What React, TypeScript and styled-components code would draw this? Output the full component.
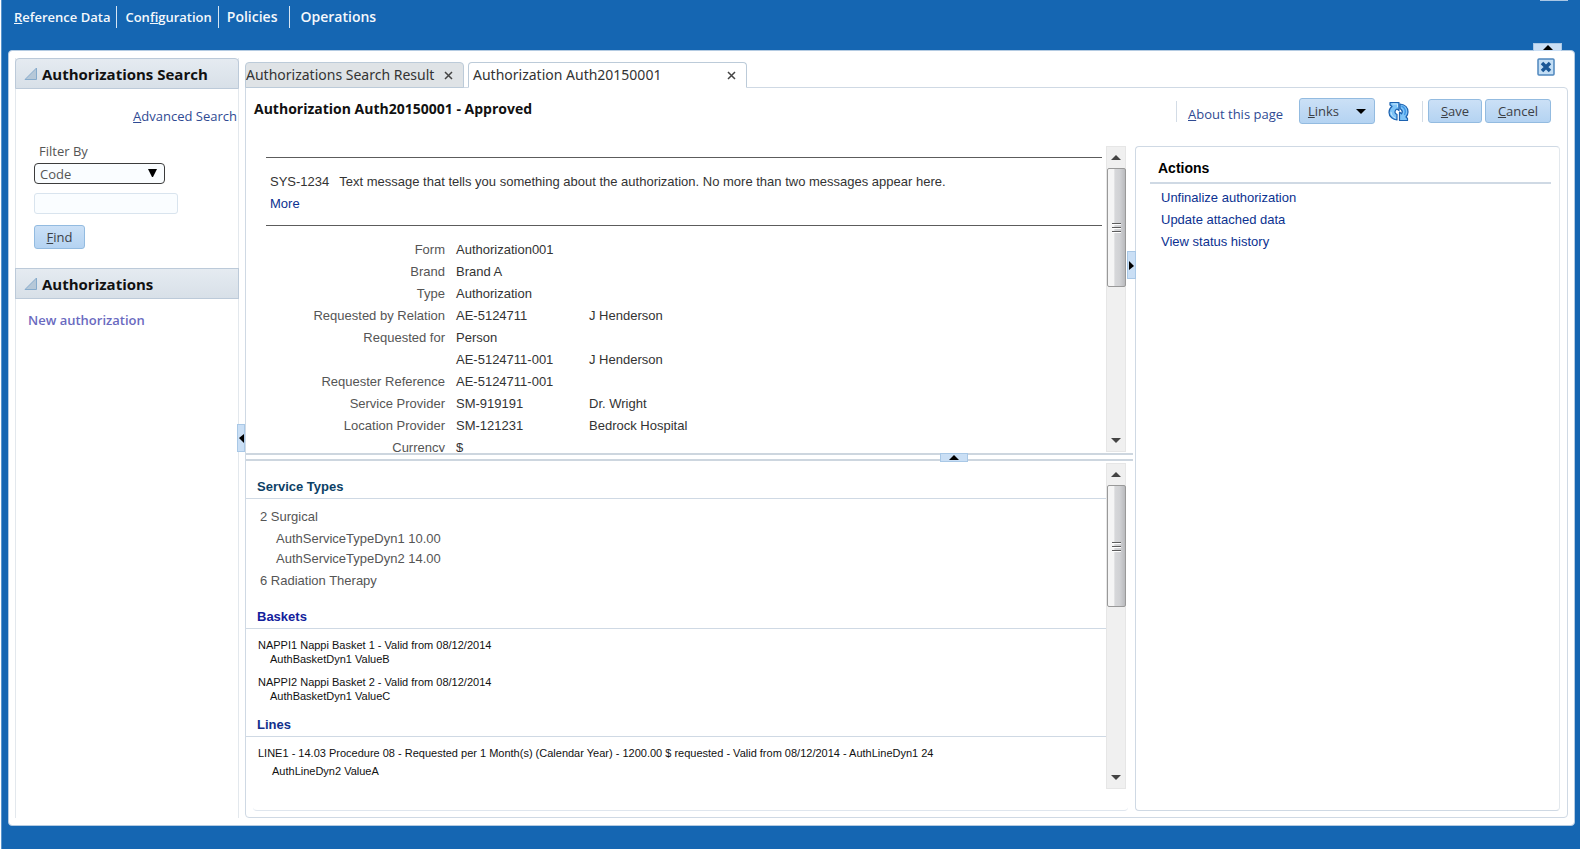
import React from 'react';
import styled, { createGlobalStyle } from 'styled-components';

const humanist = `'Noto Sans', 'Open Sans', sans-serif`;
const calibriLike = `'Open Sans', 'Noto Sans', sans-serif`;
const arial = `'Liberation Sans', Arial, sans-serif`;
const line = '#cfd9e4';
const softLine = '#e3e8ed';
const brand = '#1566b2';
const linkBlue = '#0b3190';

const GlobalStyle = createGlobalStyle`
  *, *::before, *::after { box-sizing: border-box; }
  body { margin: 0; background: #fff; font-family: ${arial}; font-size: 13px; color: #333; }
  a { text-decoration: none; color: inherit; }
  button, input, select { font: inherit; color: inherit; margin: 0; }
  h1, h2, h3, p, ul { margin: 0; padding: 0; font-weight: inherit; }
`;

const Shell = styled.div`
  min-height: calc(100vh - 4px);
  margin: 0 4px 4px 1px;
  padding: 0 5px 23px 6px;
  display: flex;
  flex-direction: column;
  background: ${brand};
  border-left: 1px solid #5b95cc;
  position: relative;
`;

const TopEdge = styled.span`
  position: absolute;
  top: 0;
  right: 12px;
  width: 28px;
  height: 1px;
  background: #a9c6e4;
`;

const NavBar = styled.nav`
  height: 50px;
  padding: 6px 0 0 6px;
  display: flex;
  align-items: flex-start;
  font: 600 13px/22px ${calibriLike};
  color: #f4f8fc;
`;

const NavLink = styled.a<{ $gap: number; $large?: boolean }>`
  padding-right: ${p => p.$gap}px;
  font-size: ${p => (p.$large ? 14 : 13)}px;
  & + & { padding-left: 8px; border-left: 1px solid #d6e5f3; }
  &:last-child { padding-left: 10px; }
`;

const Frame = styled.div`
  flex: 1;
  display: grid;
  grid-template-columns: 224px 6px minmax(0, 1fr);
  padding: 0 6px 7px 6px;
  background: #fff;
  border: 1px solid #b4cbe2;
  border-radius: 4px;
  position: relative;
`;

const Handle = styled.button`
  position: absolute;
  padding: 0;
  display: flex;
  align-items: center;
  justify-content: center;
  background: #cadff5;
  border: 1px solid #a9c8e6;
`;
const FrameHandle = styled(Handle)`
  top: -8px;
  right: 12px;
  width: 29px;
  height: 8px;
  border-bottom: 0;
`;
const SideHandle = styled(Handle)`
  top: 373px;
  left: -2px;
  width: 8px;
  height: 28px;
`;
const ActionsHandle = styled(Handle)`
  top: 104px;
  left: -9px;
  width: 9px;
  height: 28px;
`;
const PaneHandle = styled(Handle)`
  top: -2px;
  right: 165px;
  width: 28px;
  height: 9px;
`;

const Sidebar = styled.aside`
  margin-top: 7px;
  border: 1px solid ${softLine};
  border-width: 0 1px;
  font: 13px/18px ${calibriLike};
`;

const Divider = styled.div`
  position: relative;
`;

const SectionBar = styled.h2<{ $first?: boolean }>`
  height: 31px;
  margin: 0 -1px;
  padding-left: 8px;
  display: flex;
  align-items: center;
  gap: 5px;
  border: 1px solid #bccad9;
  border-radius: ${p => (p.$first ? '4px 4px 0 0' : 0)};
  background: linear-gradient(#e5ebf1, #d8e0e8);
  font: 700 15px/20px ${calibriLike};
  color: #111;
`;

const SearchForm = styled.form`
  height: 179px;
  padding: 18px 1px 0 18px;
  display: flex;
  flex-direction: column;
  align-items: flex-start;
  color: #555;
`;

const AdvancedLink = styled.a`
  align-self: flex-end;
  color: #2f4a93;
`;

const FilterLabel = styled.label`
  margin-top: 17px;
  padding-left: 5px;
`;

const SelectWrap = styled.span`
  position: relative;
  display: block;
  margin-top: 3px;
  svg { position: absolute; right: 8px; top: 6px; pointer-events: none; }
`;

const FilterSelect = styled.select`
  appearance: none;
  display: block;
  width: 131px;
  height: 21px;
  padding: 0 5px;
  border: 1px solid #3c3c3c;
  border-radius: 4px;
  background: #fafdff;
  line-height: 18px;
`;

const FilterInput = styled.input`
  width: 144px;
  height: 21px;
  margin: 9px 0 11px;
  border: 1px solid #d9e4ee;
  border-radius: 3px;
  background: #fafdff;
`;

const Button = styled.button<{ $w: number; $h?: number }>`
  width: ${p => p.$w}px;
  height: ${p => p.$h ?? 24}px;
  flex: none;
  padding: 0;
  display: flex;
  align-items: center;
  justify-content: center;
  gap: 17px;
  border: 1px solid #93bbe0;
  border-radius: 3px;
  background: linear-gradient(#cbe0f6, #b4d3f2);
  font: 13px/18px ${calibriLike};
  color: #3c4046;
`;

const ButtonPair = styled.div`
  display: flex;
  gap: 3px;
`;

const NewLink = styled.a`
  display: block;
  padding: 12px 0 0 12px;
  font-weight: 600;
  color: #6a6abf;
`;

const Main = styled.main`
  display: flex;
  flex-direction: column;
  min-width: 0;
`;

const TabRow = styled.div`
  height: 37px;
  padding-top: 11px;
  margin-bottom: -1px;
  display: flex;
  gap: 4px;
  position: relative;
  font: 14px/22px ${humanist};
`;

const Tab = styled.div<{ $active?: boolean }>`
  width: ${p => (p.$active ? 279 : 219)}px;
  display: flex;
  align-items: center;
  justify-content: space-between;
  padding: ${p => (p.$active ? '0 10px 0 4px' : '0 10px 0 0')};
  border: 1px solid #bccbd9;
  border-bottom-color: ${p => (p.$active ? '#fff' : '#bccbd9')};
  border-radius: 4px 4px 0 0;
  background: ${p => (p.$active ? '#fff' : '#dfe3e6')};
  white-space: nowrap;
`;

const Bare = styled.button`
  padding: 0;
  border: 0;
  background: none;
  display: flex;
`;

const ClosePage = styled(Bare)`
  position: absolute;
  top: 7px;
  right: 13px;
`;

const Page = styled.section`
  flex: 1;
  display: flex;
  flex-direction: column;
  padding: 0 7px 6px 0;
  border: 1px solid ${line};
  border-radius: 0 4px 4px 4px;
`;

const TitleRow = styled.header`
  height: 58px;
  padding: 9px 9px 0 8px;
  display: flex;
  justify-content: space-between;
`;

const Title = styled.h1`
  padding-top: 1px;
  font: 700 14px/22px ${calibriLike};
  color: #111;
`;

const Tools = styled.div`
  height: 28px;
  display: flex;
  align-items: center;
`;

const Rule = styled.span<{ $l: number; $r: number }>`
  width: 1px;
  height: 21px;
  margin: 0 ${p => p.$r}px 0 ${p => p.$l}px;
  background: #d3dce6;
`;

const AboutLink = styled.a`
  margin: 6px 16px 0 0;
  font: 13px/18px ${calibriLike};
  color: #2f4a93;
`;

const RefreshButton = styled(Bare)`
  margin-left: 13px;
`;

const Body = styled.div`
  flex: 1;
  display: grid;
  grid-template-columns: minmax(0, 1fr) 425px;
  gap: 2px;
`;

const Panes = styled.div`
  display: flex;
  flex-direction: column;
  min-width: 0;
`;

const Pane = styled.div<{ $h: number }>`
  height: ${p => p.$h}px;
  padding-right: 7px;
  display: grid;
  grid-template-columns: minmax(0, 1fr) 20px;
`;

const PaneContent = styled.div`
  overflow: hidden;
`;

const SplitBar = styled.div`
  height: 8px;
  margin: 1px 0 2px;
  border: solid #cdd6df;
  border-width: 2px 0;
  position: relative;
`;

const PaneFoot = styled.div`
  flex: 1;
  margin: 0 5px 0 7px;
  border-bottom: 1px solid #dfe6ee;
  border-radius: 4px;
`;

const Message = styled.section`
  margin: 11px 4px 0 20px;
  height: 69px;
  padding: 13px 4px 0;
  border: 1px solid #5c5c5c;
  border-width: 1px 0;
  line-height: 22px;
  white-space: nowrap;
  span { margin-right: 10px; }
  a { color: ${linkBlue}; }
`;

const Details = styled.table`
  margin: 13px 0 0 0;
  border-collapse: collapse;
  line-height: 22px;
  th, td { padding: 0; text-align: left; font-weight: 400; white-space: nowrap; }
  th { width: 210px; padding-right: 11px; text-align: right; color: #555; }
  td { width: 133px; }
`;

const SubHead = styled.h3<{ $tone: string; $top: number }>`
  padding: ${p => p.$top}px 0 1px 11px;
  border-bottom: 1px solid ${line};
  font-size: 13px;
  font-weight: 700;
  line-height: 20px;
  color: ${p => p.$tone};
`;

const ServiceList = styled.ul`
  padding: 7px 0 0 14px;
  list-style: none;
  line-height: 22px;
  color: #555;
  ul { padding: 1px 0 1px 16px; list-style: none; line-height: 20px; }
`;

const SmallList = styled.ul<{ $spaced?: boolean }>`
  padding: ${p => (p.$spaced ? 7 : 9)}px 0 0 12px;
  list-style: none;
  font-size: 11px;
  line-height: ${p => (p.$spaced ? 18 : 14)}px;
  color: #111;
  white-space: nowrap;
  li { margin-bottom: 9px; }
  p { padding-left: ${p => (p.$spaced ? 14 : 12)}px; }
`;

const Actions = styled.aside`
  position: relative;
  padding: 11px 8px 0 14px;
  border: 1px solid ${line};
  border-right-color: ${softLine};
  border-radius: 4px;
`;

const ActionsTitle = styled.h2`
  padding: 0 0 4px 8px;
  border-bottom: 2px solid ${line};
  font: 700 14px/20px ${arial};
  color: #000;
`;

const ActionList = styled.ul`
  padding: 3px 0 0 11px;
  list-style: none;
  line-height: 22px;
  color: ${linkBlue};
`;

const Track = styled.div`
  display: flex;
  flex-direction: column;
  align-items: center;
  background: #f0f0f0;
  border: 1px solid #e6e6e6;
`;

const ArrowCell = styled.span<{ $last?: boolean }>`
  height: 21px;
  display: flex;
  align-items: center;
  margin-top: ${p => (p.$last ? 'auto' : 0)};
`;

const Thumb = styled.span<{ $h: number }>`
  width: 19px;
  height: ${p => p.$h}px;
  display: flex;
  align-items: center;
  justify-content: center;
  border: 1px solid #999;
  border-radius: 2px;
  background: linear-gradient(90deg, #f5f5f5 0 35%, #d7d8da 40%, #d0d1d4 70%, #b9babd);
`;

const arrows = { up: 'M0 5 5 0l5 5z', down: 'M0 0h10L5 5z', left: 'M5 0v9L0 4z', right: 'M0 0v9l5-4z' };

function Arrow({ dir, fill = '#000' }: { dir: keyof typeof arrows; fill?: string }) {
  const side = dir === 'left' || dir === 'right';
  return (
    <svg width={side ? 5 : 10} height={side ? 9 : 5} aria-hidden="true">
      <path d={arrows[dir]} fill={fill} />
    </svg>
  );
}

function Scrollbar({ thumb }: { thumb: number }) {
  return (
    <Track aria-hidden="true">
      <ArrowCell><Arrow dir="up" fill="#444" /></ArrowCell>
      <Thumb $h={thumb}>
        <svg width="9" height="11">
          <path d="M0 1.500h9M0 5.500h9M0 9.500h9" stroke="#5c5c5c" />
          <path d="M0 2.500h9M0 6.500h9M0 10.500h9" stroke="#fff" />
        </svg>
      </Thumb>
      <ArrowCell $last><Arrow dir="down" fill="#444" /></ArrowCell>
    </Track>
  );
}

function Disclosure() {
  return (
    <svg width="13" height="13" aria-hidden="true">
      <path d="M12.500 1v11.500H1z" fill="#b6c8d8" stroke="#86abcc" />
    </svg>
  );
}

function Cross() {
  return (
    <svg width="9" height="9" aria-hidden="true">
      <path d="M1 1l7 7M8 1l-7 7" stroke="#444" strokeWidth="1.500" />
    </svg>
  );
}

function RefreshIcon() {
  return (
    <svg width="21" height="21" viewBox="0 0 21 21" aria-hidden="true">
      <g fill="#7fc4f7" stroke="#1c62b0" strokeWidth="1.200" strokeLinejoin="round">
        <path d="M2 1.500h9V9.500L9 8C7 9 6.500 11 7.500 12.500L9 13.500V19C5.500 18.500 1 16 1 11.500 1 8.500 2.500 6.500 4 5.500L2 4z" />
        <path d="M19.500 19.500h-8v-8.500l2 1.800c1-1.300 1-3-.3-4.300l-1.200-.8V3c5 .6 8 3.500 8 8 0 2-.7 3.500-2 5l1.500 1.500z" />
      </g>
      <path d="M4.500 3h5v3M3 11c0 3 2 5 4.500 6" stroke="#c9e8fd" fill="none" />
      <path d="M13.500 5c3.500 1.500 5 5.500 3 9" stroke="#3f97e6" fill="none" strokeWidth="1.500" />
    </svg>
  );
}

function CloseIcon() {
  return (
    <svg width="18" height="18" aria-hidden="true">
      <rect x="1" y="1" width="16" height="16" rx="1" fill="#c3def5" stroke="#4f86bd" strokeWidth="1.500" />
      <path d="M5 5l8 8M13 5l-8 8" stroke="#1a5796" strokeWidth="3.500" />
    </svg>
  );
}

const details: [string, string, string?][] = [
  ['Form', 'Authorization001'],
  ['Brand', 'Brand A'],
  ['Type', 'Authorization'],
  ['Requested by Relation', 'AE-5124711', 'J Henderson'],
  ['Requested for', 'Person'],
  ['', 'AE-5124711-001', 'J Henderson'],
  ['Requester Reference', 'AE-5124711-001'],
  ['Service Provider', 'SM-919191', 'Dr. Wright'],
  ['Location Provider', 'SM-121231', 'Bedrock Hospital'],
  ['Currency', '$'],
];

const actions = ['Unfinalize authorization', 'Update attached data', 'View status history'];

export default function App() {
  return (
    <>
      <GlobalStyle />
      <Shell>
        <TopEdge />
        <NavBar>
          <NavLink href="#" $gap={6}><u>R</u>eference Data</NavLink>
          <NavLink href="#" $gap={6}>Con<u>f</u>iguration</NavLink>
          <NavLink href="#" $gap={12} $large>Policies</NavLink>
          <NavLink href="#" $gap={0} $large>Operations</NavLink>
        </NavBar>
        <Frame>
          <FrameHandle aria-label="Collapse header"><Arrow dir="up" /></FrameHandle>
          <Sidebar>
            <SectionBar $first><Disclosure />Authorizations Search</SectionBar>
            <SearchForm onSubmit={e => e.preventDefault()}>
              <AdvancedLink href="#"><u>A</u>dvanced Search</AdvancedLink>
              <FilterLabel htmlFor="filter">Filter By</FilterLabel>
              <SelectWrap>
                <FilterSelect id="filter"><option>Code</option></FilterSelect>
                <svg width="9" height="8" aria-hidden="true"><path d="M0 0h9L5 8H4z" /></svg>
              </SelectWrap>
              <FilterInput aria-label="Filter value" />
              <Button $w={51}><span><u>F</u>ind</span></Button>
            </SearchForm>
            <SectionBar><Disclosure />Authorizations</SectionBar>
            <NewLink href="#">New authorization</NewLink>
          </Sidebar>
          <Divider>
            <SideHandle aria-label="Collapse sidebar"><Arrow dir="left" /></SideHandle>
          </Divider>
          <Main>
            <TabRow role="tablist">
              <Tab>
                <Bare role="tab" aria-selected={false}>Authorizations Search Result</Bare>
                <Bare aria-label="Close search result"><Cross /></Bare>
              </Tab>
              <Tab $active>
                <Bare role="tab" aria-selected>Authorization Auth20150001</Bare>
                <Bare aria-label="Close authorization"><Cross /></Bare>
              </Tab>
              <ClosePage aria-label="Close page"><CloseIcon /></ClosePage>
            </TabRow>
            <Page>
              <TitleRow>
                <Title>Authorization Auth20150001 - Approved</Title>
                <Tools>
                  <Rule $l={0} $r={11} />
                  <AboutLink href="#"><u>A</u>bout this page</AboutLink>
                  <Button $w={76} $h={26}><span><u>L</u>inks</span><Arrow dir="down" /></Button>
                  <RefreshButton aria-label="Refresh"><RefreshIcon /></RefreshButton>
                  <Rule $l={13} $r={5} />
                  <ButtonPair>
                    <Button $w={54}><span><u>S</u>ave</span></Button>
                    <Button $w={66}><span><u>C</u>ancel</span></Button>
                  </ButtonPair>
                </Tools>
              </TitleRow>
              <Body>
                <Panes>
                  <Pane $h={306}>
                    <PaneContent>
                      <Message>
                        <p><span>SYS-1234</span>Text message that tells you something about the authorization. No more than two messages appear here.</p>
                        <a href="#">More</a>
                      </Message>
                      <Details>
                        <tbody>
                          {details.map(([label, value, name], i) => (
                            <tr key={i}>
                              <th scope="row">{label}</th>
                              <td>{value}</td>
                              <td>{name}</td>
                            </tr>
                          ))}
                        </tbody>
                      </Details>
                    </PaneContent>
                    <Scrollbar thumb={119} />
                  </Pane>
                  <SplitBar>
                    <PaneHandle aria-label="Collapse details"><Arrow dir="up" /></PaneHandle>
                  </SplitBar>
                  <Pane $h={326}>
                    <PaneContent>
                      <SubHead $tone="#0c3f66" $top={14}>Service Types</SubHead>
                      <ServiceList>
                        <li>
                          2 Surgical
                          <ul>
                            <li>AuthServiceTypeDyn1 10.00</li>
                            <li>AuthServiceTypeDyn2 14.00</li>
                          </ul>
                        </li>
                        <li>6 Radiation Therapy</li>
                      </ServiceList>
                      <SubHead $tone="#12219c" $top={15}>Baskets</SubHead>
                      <SmallList>
                        <li>NAPPI1 Nappi Basket 1 - Valid from 08/12/2014<p>AuthBasketDyn1 ValueB</p></li>
                        <li>NAPPI2 Nappi Basket 2 - Valid from 08/12/2014<p>AuthBasketDyn1 ValueC</p></li>
                      </SmallList>
                      <SubHead $tone="#12308c" $top={3}>Lines</SubHead>
                      <SmallList $spaced>
                        <li>
                          LINE1 - 14.03 Procedure 08 - Requested per 1 Month(s) (Calendar Year) - 1200.00 $ requested - Valid from 08/12/2014 - AuthLineDyn1 24
                          <p>AuthLineDyn2 ValueA</p>
                        </li>
                      </SmallList>
                    </PaneContent>
                    <Scrollbar thumb={122} />
                  </Pane>
                  <PaneFoot />
                </Panes>
                <Actions>
                  <ActionsHandle aria-label="Collapse actions"><Arrow dir="right" /></ActionsHandle>
                  <ActionsTitle>Actions</ActionsTitle>
                  <ActionList>
                    {actions.map(a => <li key={a}><a href="#">{a}</a></li>)}
                  </ActionList>
                </Actions>
              </Body>
            </Page>
          </Main>
        </Frame>
      </Shell>
    </>
  );
}
